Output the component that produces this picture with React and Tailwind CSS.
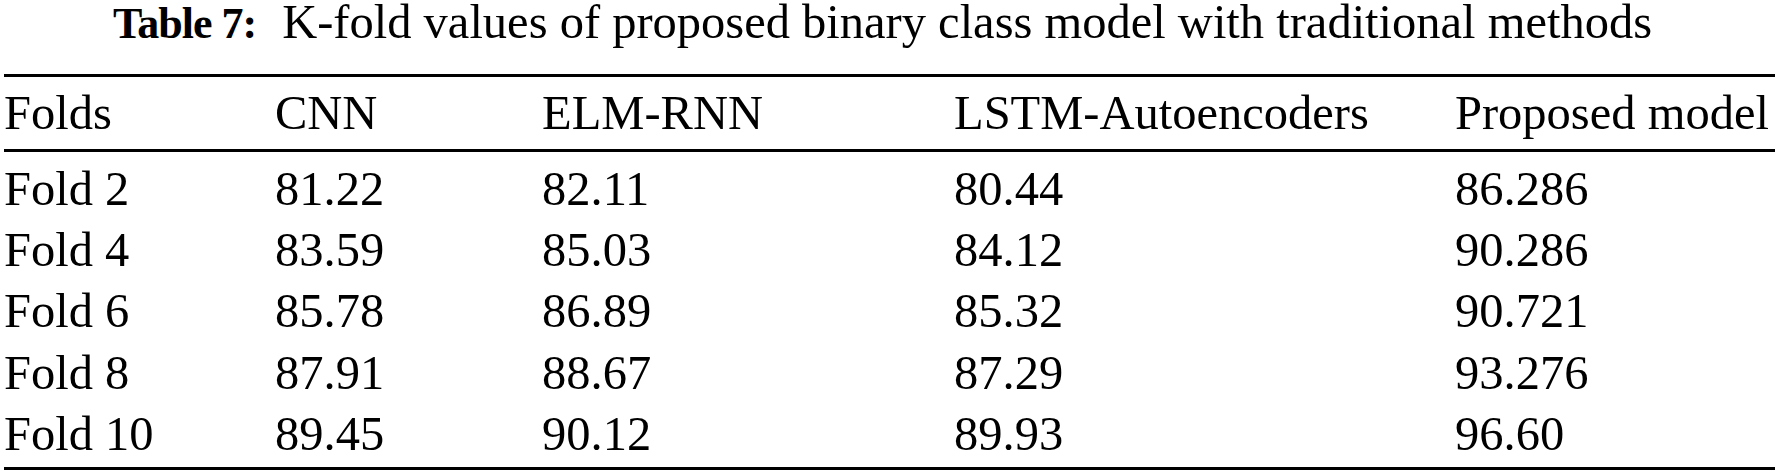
const headers = ["Folds", "CNN", "ELM-RNN", "LSTM-Autoencoders", "Proposed model"];

const rows = [
  ["Fold 2", "81.22", "82.11", "80.44", "86.286"],
  ["Fold 4", "83.59", "85.03", "84.12", "90.286"],
  ["Fold 6", "85.78", "86.89", "85.32", "90.721"],
  ["Fold 8", "87.91", "88.67", "87.29", "93.276"],
  ["Fold 10", "89.45", "90.12", "89.93", "96.60"],
];

const cols = "grid grid-cols-[271px_267px_412px_501px_1fr]";
const cell = "text-[48.5px] leading-[61.25px] whitespace-nowrap";

export default function App() {
  return (
    <div className="w-[1779px] h-[475px] bg-white text-black font-['Liberation_Serif','Times_New_Roman',serif]">
      {/* caption */}
      <p className="pt-px pl-[113px] text-[48.5px] leading-[42px] whitespace-nowrap">
        <span className="font-bold text-[44px] tracking-[-1px]">Table 7:</span>
        <span className="ml-[26px]">K-fold values of proposed binary class model with traditional methods</span>
      </p>

      <div className="mt-[29px] ml-[4px] w-[1771px] border-t-[3px] border-b-[3px] border-black">
        <div className={`${cols} pt-[5px] pb-[6px] border-b-[3px] border-black`}>
          {headers.map((h) => (
            <div key={h} className={cell}>
              {h}
            </div>
          ))}
        </div>

        <div className="pt-[5.5px] pb-[2.75px]">
          {rows.map((r) => (
            <div key={r[0]} className={cols}>
              {r.map((c, i) => (
                <div key={i} className={cell}>
                  {c}
                </div>
              ))}
            </div>
          ))}
        </div>
      </div>
    </div>
  );
}
